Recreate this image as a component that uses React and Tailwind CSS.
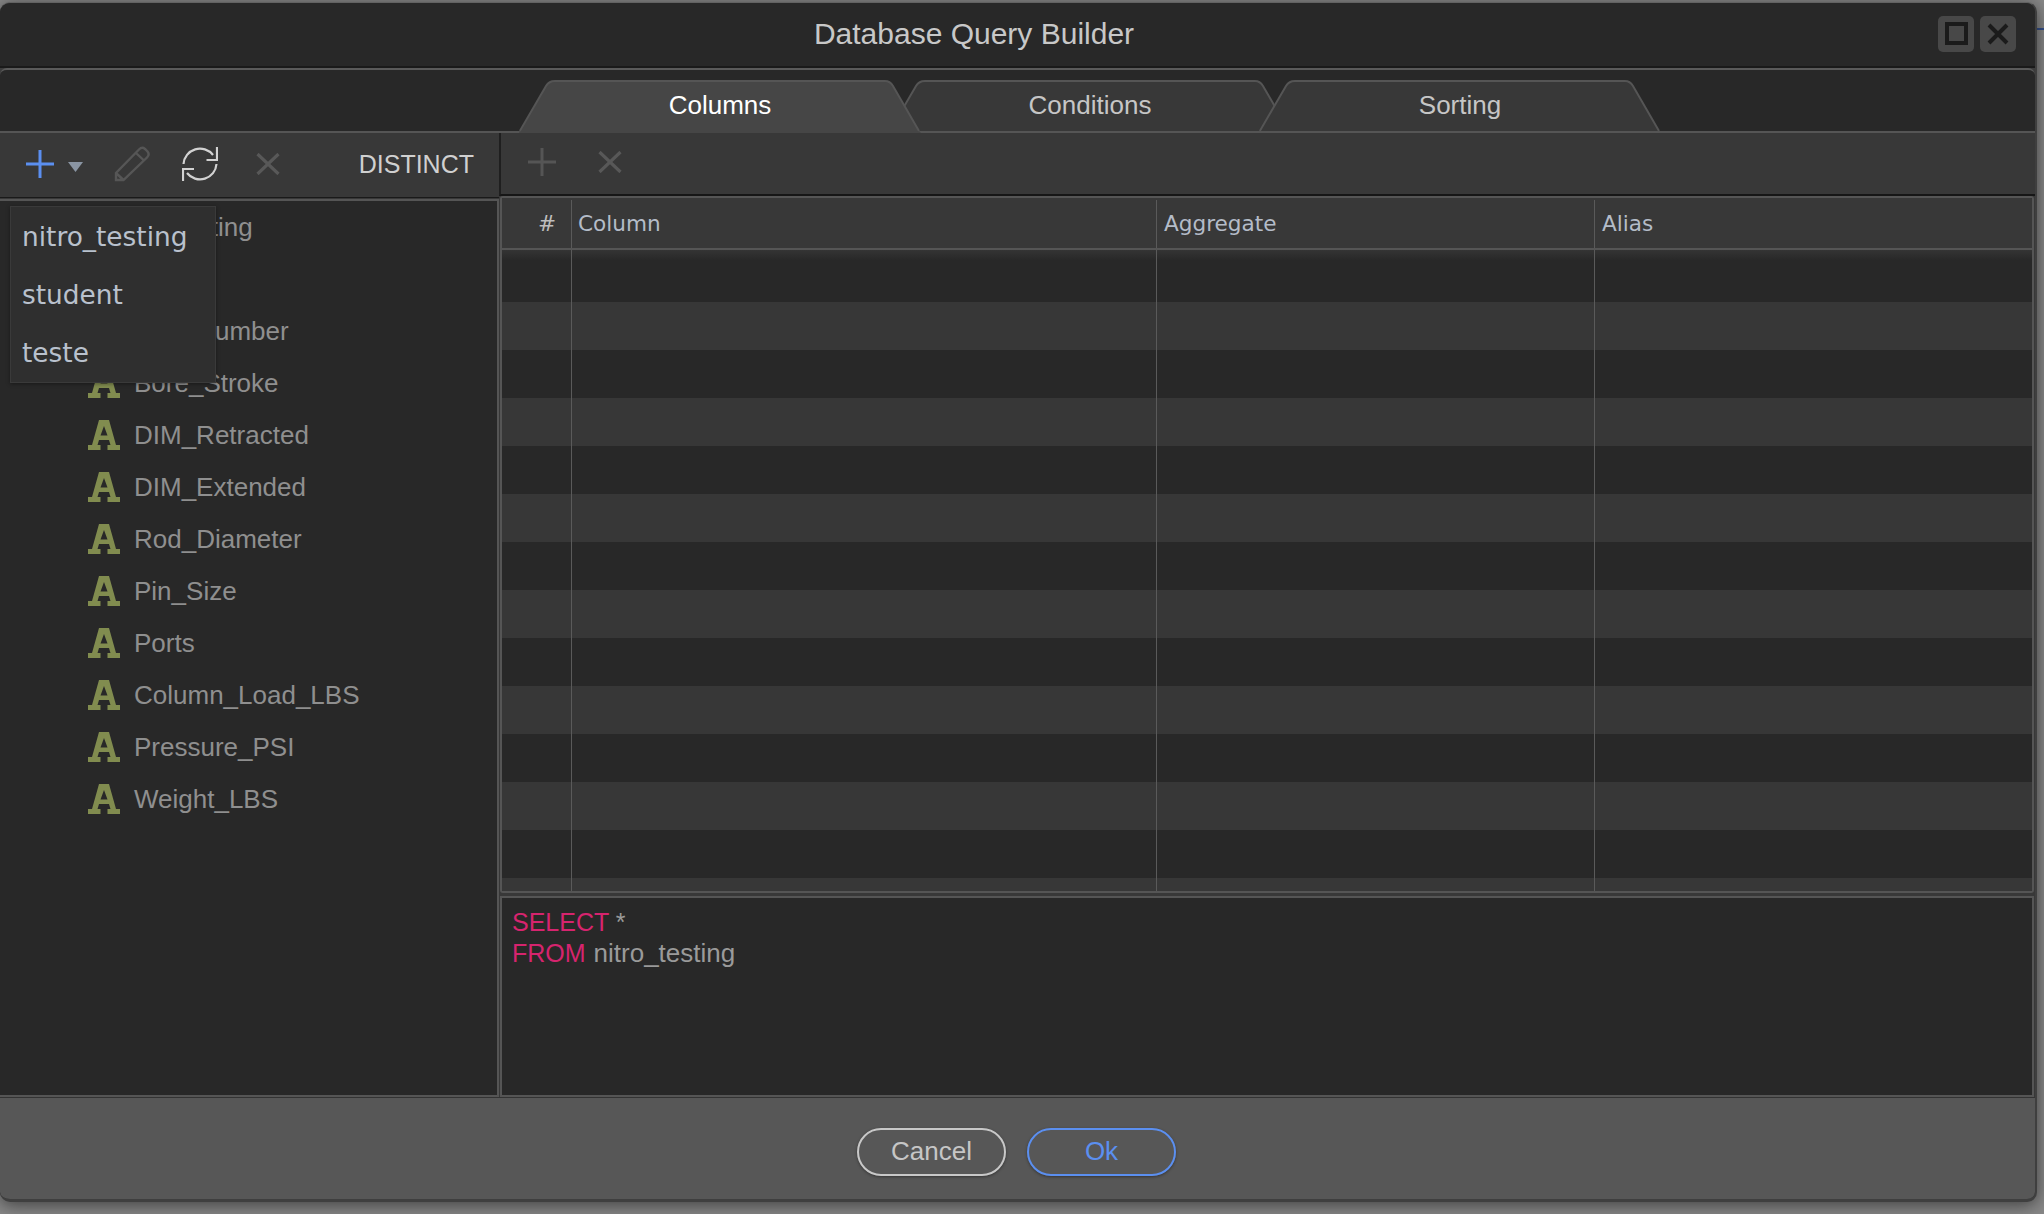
import React from "react";

const columns = [
  "Bore_Stroke",
  "DIM_Retracted",
  "DIM_Extended",
  "Rod_Diameter",
  "Pin_Size",
  "Ports",
  "Column_Load_LBS",
  "Pressure_PSI",
  "Weight_LBS",
];

function AIcon() {
  return (
    <svg width="32" height="30" viewBox="0 0 32 30" className="shrink-0">
      <path
        fill="#818c4f"
        fillRule="evenodd"
        d="M11 0H21L28 25H32V30H19.5V25H22.5L21 20H11L9.5 25H12.5V30H0V25H4ZM16 6L12.5 15.5H19.5Z"
      />
    </svg>
  );
}

function Tab({ label, active, first }) {
  return (
    <div
      className={
        "relative w-[402px] flex items-start justify-center " +
        (active ? "z-10 h-[53px] " : "h-[51px] ") +
        (first ? "" : "-ml-[32px]")
      }
    >
      <svg
        className="absolute left-0 top-0 w-full h-full"
        viewBox={active ? "0 0 402 53" : "0 0 402 51"}
        preserveAspectRatio="none"
      >
        <path
          d={
            active
              ? "M0 53L0.8 51L27 6Q30 1 36 1H366Q371 1 374 6L400 51L402 53Z"
              : "M0.8 51L27 6Q30 1 36 1H366Q371 1 374 6L400 51Z"
          }
          fill={active ? "#464646" : "#383838"}
        />
        <path
          d="M0.8 51L27 6Q30 1 36 1H366Q371 1 374 6L400 51"
          fill="none"
          stroke="#555555"
          strokeWidth="2"
        />
      </svg>
      <span
        className={
          "relative mt-[8px] text-[26px] leading-[34px] " +
          (active ? "text-white" : "text-[#c6c6c6]")
        }
      >
        {label}
      </span>
    </div>
  );
}

function Plus({ color, size = 28, stroke = 3 }) {
  return (
    <svg width={size} height={size} viewBox="0 0 28 28" className="shrink-0">
      <path d="M14 0V28M0 14H28" stroke={color} strokeWidth={stroke} fill="none" />
    </svg>
  );
}

function Cross({ color = "#585858" }) {
  return (
    <svg width="24" height="22" viewBox="0 0 24 22" className="shrink-0">
      <path d="M1.5 1L22.5 21M22.5 1L1.5 21" stroke={color} strokeWidth="3.2" fill="none" />
    </svg>
  );
}

const gridCols = "grid grid-cols-[70px_585px_438px_1fr]";
const sep = "border-r-[1.5px] border-[#5a5a5a]";

function Row({ light, first, height }) {
  return (
    <div
      className={
        gridCols +
        " " +
        (first
          ? "bg-[linear-gradient(#343434,#282828_10px)]"
          : light
          ? "bg-[#373737]"
          : "bg-[#282828]")
      }
      style={{ height }}
    >
      <div className={sep} />
      <div className={sep} />
      <div className={sep} />
      <div />
    </div>
  );
}

export default function App() {
  const rows = [];
  for (let i = 0; i < 13; i++) {
    rows.push(<Row key={i} first={i === 0} light={i % 2 === 1} height={i === 0 ? 52 : 48} />);
  }
  rows.push(<Row key="last" light height={13} />);

  return (
    <div className="relative w-[2044px] h-[1214px] overflow-hidden bg-[#888888] font-['Liberation_Sans',sans-serif] pt-[2px]">
      <div className="absolute right-0 top-[28px] h-[2px] w-[7px] bg-[#34508c]" />
      <div className="relative flex flex-col w-[2037px] h-[1200px] rounded-[10px] overflow-hidden bg-[#3c3c3c] border-r-2 border-b-[3px] border-[#3f3f3f] border-t border-t-[#626262] shadow-[0_3px_18px_rgba(0,0,0,0.55)]">
        {/* Title bar */}
        <div className="flex items-center h-[63px] shrink-0 bg-[#282828] border-b-0">
          <div className="flex-1 pl-[10px] text-center text-[30px] leading-[36px] text-[#c8c8c8] -mt-[1px]">
            Database Query Builder
          </div>
          <div className="flex gap-[6px] pr-[19px] -mt-[2px]">
            <div className="w-[36px] h-[36px] rounded-[5px] bg-[#484848] flex items-center justify-center">
              <div className="w-[23px] h-[23px] border-[4px] border-[#1b1b1b]" />
            </div>
            <div className="w-[36px] h-[36px] rounded-[5px] bg-[#484848] flex items-center justify-center">
              <svg width="22" height="22" viewBox="0 0 22 22">
                <path d="M2 2L20 20M20 2L2 20" stroke="#1b1b1b" strokeWidth="4" fill="none" />
              </svg>
            </div>
          </div>
        </div>
        <div className="h-[2px] shrink-0 bg-[#1a1a1a]" />

        {/* Main section */}
        <div className="flex-1 flex flex-col rounded-t-[7px] overflow-hidden bg-[#282828] border-t-2 border-[#5a5a5a] min-h-0">
          {/* Tabs */}
          <div className="flex items-start shrink-0 h-[63px] pt-[10px] pl-[519px] border-b-2 border-[#555555]">
            <Tab label="Columns" active first />
            <Tab label="Conditions" />
            <Tab label="Sorting" />
          </div>

          {/* Body */}
          <div className="flex h-[964px] shrink-0 bg-[#383838]">
            {/* Left column */}
            <div className="flex flex-col w-[499px] shrink-0 h-full">
              <div className="flex items-center h-[65px] shrink-0 pl-[26px] pr-[25px] pb-[2px] border-b border-[#1a1a1a] bg-[#383838]">
                <Plus color="#5b8ff0" />
                <svg width="15" height="10" viewBox="0 0 15 10" className="ml-[14px] mt-[6px] shrink-0">
                  <path d="M0 0H15L7.5 10Z" fill="#8a95a3" />
                </svg>
                <svg width="36" height="36" viewBox="0 0 36 36" className="ml-[31px] shrink-0">
                  <path
                    d="M2 34V27L25 3.5Q28 0.5 31 3L33.5 5.5Q36 8.5 33 11.5L9.5 34ZM22 7L30.5 15M2 27L9.5 34"
                    fill="none"
                    stroke="#565656"
                    strokeWidth="2.4"
                  />
                </svg>
                <svg width="36" height="36" viewBox="0 0 36 36" className="ml-[32px] shrink-0">
                  <path
                    d="M1.5 18A16.5 16.5 0 0 1 31 9M35 1V14H24.5M34.5 18A16.5 16.5 0 0 1 5 27M1 35V23H12"
                    fill="none"
                    stroke="#d2d2d2"
                    strokeWidth="2.2"
                  />
                </svg>
                <div className="ml-[38px]">
                  <Cross />
                </div>
                <div className="ml-auto text-[25px] leading-[32px] text-[#d0d0d0]">DISTINCT</div>
              </div>
              <div className="relative flex-1 min-h-0 mt-px bg-[#282828] border-t-2 border-r-2 border-b-2 border-[#555555]">
                <div className="flex items-center h-[52px] pl-[111px] text-[26px] text-[#8f8f8f]">
                  nitro_testing
                </div>
                <div className="flex items-center gap-[14px] h-[52px] pl-[88px] text-[26px] text-[#8f8f8f]">
                  <AIcon />
                  <span>id</span>
                </div>
                <div className="flex items-center gap-[14px] h-[52px] pl-[88px] text-[26px] text-[#8f8f8f]">
                  <AIcon />
                  <span>Part_Number</span>
                </div>
                {columns.map((c) => (
                  <div
                    key={c}
                    className="flex items-center gap-[14px] h-[52px] pl-[88px] text-[26px] text-[#8f8f8f]"
                  >
                    <AIcon />
                    <span>{c}</span>
                  </div>
                ))}
                {/* Dropdown */}
                <div className="absolute left-[10px] top-[5px] w-[206px] h-[177px] py-[1px] bg-[#2f2f2f] border border-[#3a3a3a] shadow-[0_1px_4px_rgba(0,0,0,0.4)] font-['DejaVu_Sans',sans-serif] text-[26.4px] text-[#b9c1cd]">
                  <div className="flex items-center h-[58px] pl-[11px]">nitro_testing</div>
                  <div className="flex items-center h-[58px] pl-[11px]">student</div>
                  <div className="flex items-center h-[58px] pl-[11px]">teste</div>
                </div>
              </div>
            </div>

            {/* Right column */}
            <div className="flex flex-col flex-1 min-w-0 h-full border-l-0 pr-[1px]">
              <div className="flex items-center h-[63px] shrink-0 pl-[27px] pb-[3px] gap-[42px] border-l-2 border-l-[#1f1f1f] border-b-2 border-b-[#161616] bg-[#383838] -mr-[1px]">
                <Plus color="#555555" />
                <Cross color="#585858" />
              </div>
              <div className="flex flex-col h-[697px] shrink-0 ml-[1px] border-2 border-[#555555] rounded-[3px] overflow-hidden bg-[#282828]">
                <div className={gridCols + " h-[52px] shrink-0 bg-[#383838] border-b-2 border-[#555555] pt-[2px] font-['DejaVu_Sans',sans-serif] text-[21.6px] text-[#b4bcc8]"}>
                  <div className={sep + " flex items-center justify-end pr-[15px] text-[#bdbdbd]"}>#</div>
                  <div className={sep + " flex items-center pl-[6px]"}>Column</div>
                  <div className={sep + " flex items-center pl-[7px]"}>Aggregate</div>
                  <div className="flex items-center pl-[7px]">Alias</div>
                </div>
                <div className="flex-1 min-h-0 overflow-hidden">{rows}</div>
              </div>
              <div className="flex-1 min-h-0 mt-[3px] ml-[1px] border-2 border-[#555555] bg-[#282828] pl-[10px] pt-[9px] text-[25px] leading-[31px] text-[#9a9a9a]">
                <div>
                  <span className="text-[#d6246e]">SELECT</span> *
                </div>
                <div>
                  <span className="text-[#d6246e]">FROM</span>{" "}
                  <span className="ml-[1px] text-[26px]">nitro_testing</span>
                </div>
              </div>
            </div>
          </div>

          {/* Footer */}
          <div className="flex-1 flex items-center justify-center gap-[21px] bg-[#575757] border-t border-[#333333] min-h-0 pt-[6px] pr-[2px]">
            <button className="w-[149px] h-[48px] rounded-full border-2 border-[#c8c8c8] text-[26px] text-[#c6c6c6] shadow-[0_1px_3px_rgba(0,0,0,0.4)]">
              Cancel
            </button>
            <button className="w-[149px] h-[48px] rounded-full border-2 border-[#5b8ff0] text-[26px] text-[#5b8ff0] shadow-[0_1px_3px_rgba(0,0,0,0.4)]">
              Ok
            </button>
          </div>
        </div>
      </div>
    </div>
  );
}
